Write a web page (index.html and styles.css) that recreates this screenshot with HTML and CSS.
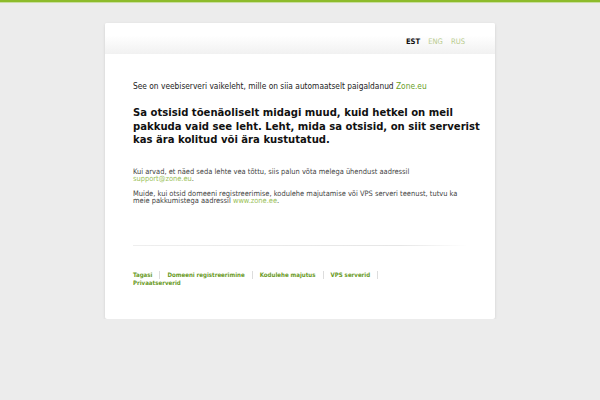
FILE: index.html
```html
<!DOCTYPE html>
<html lang="et">
<head>
<meta charset="utf-8">
<title>Zone.eu</title>
<link rel="stylesheet" href="styles.css">
</head>
<body>
<div class="topbar"></div>
<div class="page">
  <div class="card">
    <div class="header">
      <nav class="langs">
        <span class="lang active">EST</span>
        <a class="lang" href="#">ENG</a>
        <a class="lang" href="#">RUS</a>
      </nav>
    </div>
    <div class="content">
      <p class="intro">See on veebiserveri vaikeleht, mille on siia automaatselt paigaldanud <a href="#">Zone.eu</a></p>
      <h1 class="headline">Sa otsisid tõenäoliselt midagi muud, kuid hetkel on meil pakkuda vaid see leht. Leht, mida sa otsisid, on siit serverist kas ära kolitud või ära kustutatud.</h1>
      <p class="small">Kui arvad, et näed seda lehte vea tõttu, siis palun võta melega ühendust aadressil <a href="#">support@zone.eu</a>.</p>
      <p class="small">Muide, kui otsid domeeni registreerimise, kodulehe majutamise või VPS serveri teenust, tutvu ka meie pakkumistega aadressil <a href="#">www.zone.ee</a>.</p>
      <hr class="rule">
      <ul class="footer-links">
        <li><a href="#">Tagasi</a></li>
        <li><a href="#">Domeeni registreerimine</a></li>
        <li><a href="#">Kodulehe majutus</a></li>
        <li><a href="#">VPS serverid</a></li>
        <li><a href="#">Privaatserverid</a></li>
      </ul>
    </div>
  </div>
</div>
</body>
</html>
```

FILE: styles.css
```css
html, body {
  margin: 0;
  padding: 0;
}
body {
  background: #ececec;
  font-family: "DejaVu Sans Condensed", "DejaVu Sans", sans-serif;
  color: #222;
}
a {
  color: #6f9f1f;
  text-decoration: none;
}
.topbar {
  height: 2px;
  background: #8dbb2b;
  border-bottom: 1px solid #c9dea0;
}
.page {
  padding-top: 20px;
  padding-left: 105px;
}
.card {
  width: 390px;
  height: 296px;
  background: #fff;
  box-shadow: 0 1px 3px rgba(0,0,0,0.12);
  border-radius: 2px;
}
.header {
  height: 31px;
  background: linear-gradient(#ffffff 0%, #ffffff 40%, #f1f1f1 100%);
  display: flex;
  justify-content: flex-end;
  align-items: center;
  padding-right: 30px;
  border-radius: 2px 2px 0 0;
}
.langs {
  display: flex;
  gap: 8px;
  font-size: 7.6px;
  margin-top: 5px;
}
.lang {
  color: #b9cc8e;
}
.lang.active {
  color: #111;
  font-weight: bold;
}
.content {
  padding: 0 28px 0 28px;
}
.intro {
  margin: 27px 0 0;
  font-size: 8.3px;
  line-height: 10px;
}
.intro a {
  color: #6a9e1f;
}
.headline {
  margin: 15px -14px 0 0;
  font-size: 11.2px;
  line-height: 13.5px;
  font-weight: bold;
  color: #111;
}
.small {
  margin: 21px 0 0;
  font-size: 7.45px;
  line-height: 7.6px;
  color: #444;
}
.small a {
  color: #9bbf5a;
}
.small + .small {
  margin-top: 7px;
}
.rule {
  margin: 40px 0 0;
  border: 0;
  height: 1px;
  background: linear-gradient(90deg, #eee, #e6e6e6 80%, #fff);
}
.footer-links {
  list-style: none;
  margin: 25px 0 0;
  padding: 0;
  font-size: 6.1px;
  line-height: 8px;
  font-weight: bold;
  display: flex;
  flex-wrap: wrap;
  max-width: 300px;
}
.footer-links a {
  color: #6a9a25;
}
.footer-links li {
  padding-right: 7px;
  margin-right: 7px;
  border-right: 1px solid #ddd;
}
.footer-links li:last-child {
  border-right: 0;
}
```
